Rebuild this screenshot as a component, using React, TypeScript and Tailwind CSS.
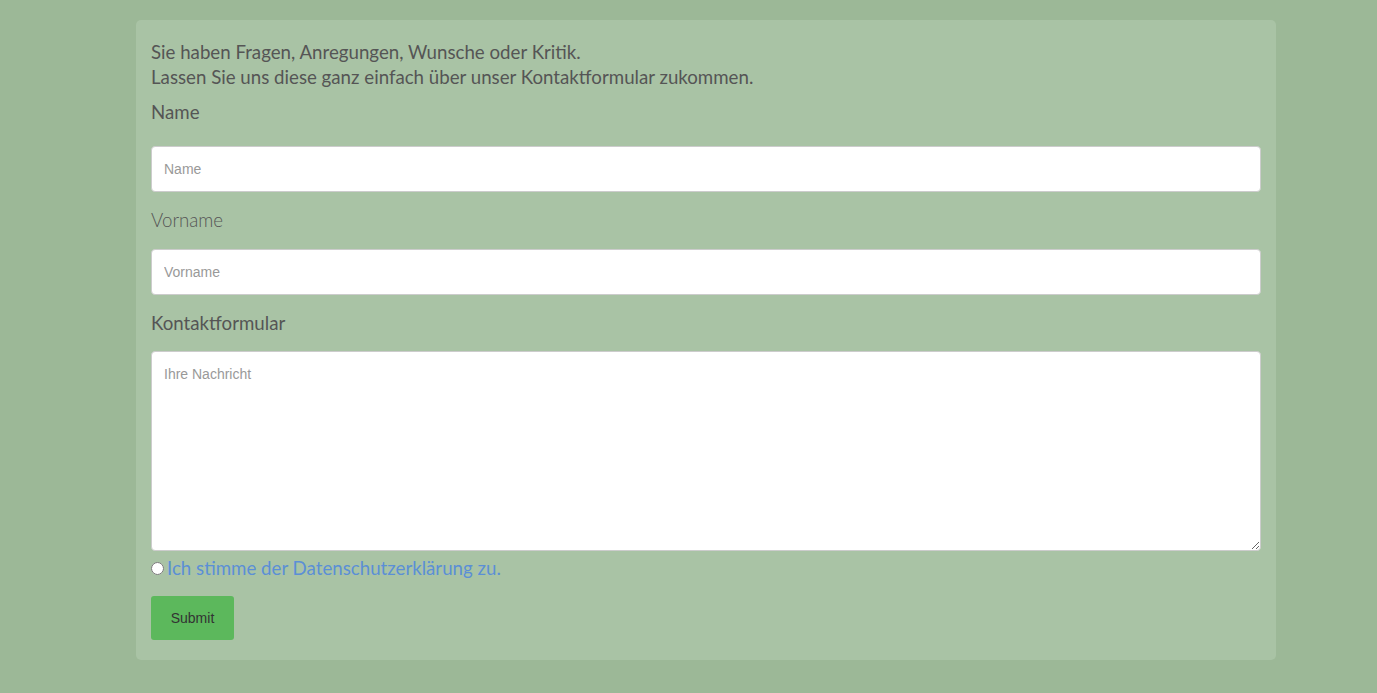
export default function App() {
  return (
    <div className="min-h-[693px] w-full bg-[#9cb897] pt-[20px] font-['Lato',sans-serif]">
      <div className="ml-[136px] w-[1140px] rounded-[5px] bg-[#a9c3a5] px-[15px] pt-[20px] pb-[20px] text-[#555555]">
        <p className="text-[18.7px] leading-[25px]">
          Sie haben Fragen, Anregungen, Wunsche oder Kritik.
          <br />
          Lassen Sie uns diese ganz einfach über unser Kontaktformular zukommen.
        </p>

        <label className="mt-[10px] mb-[21px] block text-[18.7px] leading-[25px]">Name</label>
        <input
          type="text"
          placeholder="Name"
          className="block h-[46px] w-full rounded-[4px] border border-[#cccccc] bg-white px-[12px] font-['Liberation_Sans',sans-serif] text-[14px] text-[#555] placeholder:text-[#999] outline-none"
        />

        <label className="mt-[16px] mb-[16px] block text-[18.7px] font-light leading-[25px]">Vorname</label>
        <input
          type="text"
          placeholder="Vorname"
          className="block h-[46px] w-full rounded-[4px] border border-[#cccccc] bg-white px-[12px] font-['Liberation_Sans',sans-serif] text-[14px] text-[#555] placeholder:text-[#999] outline-none"
        />

        <label className="mt-[16px] mb-[15px] block text-[18.7px] leading-[25px]">Kontaktformular</label>
        <textarea
          placeholder="Ihre Nachricht"
          className="block h-[200px] w-full rounded-[4px] border border-[#cccccc] bg-white px-[12px] py-[14px] font-['Liberation_Sans',sans-serif] text-[14px] leading-[16px] text-[#555] placeholder:text-[#999] outline-none"
        />

        <div className="mt-[5px] flex h-[25px] items-center gap-[3px]">
          <input type="radio" className="m-0 h-[13px] w-[13px]" />
          <span className="text-[18.7px] leading-[25px] text-[#5b8fd6]">Ich stimme der Datenschutzerklärung zu.</span>
        </div>

        <button
          type="button"
          className="mt-[15px] block h-[44px] w-[83px] rounded-[3px] bg-[#5cb85c] font-['Liberation_Sans',sans-serif] text-[14px] text-[#333]"
        >
          Submit
        </button>
      </div>
    </div>
  );
}
